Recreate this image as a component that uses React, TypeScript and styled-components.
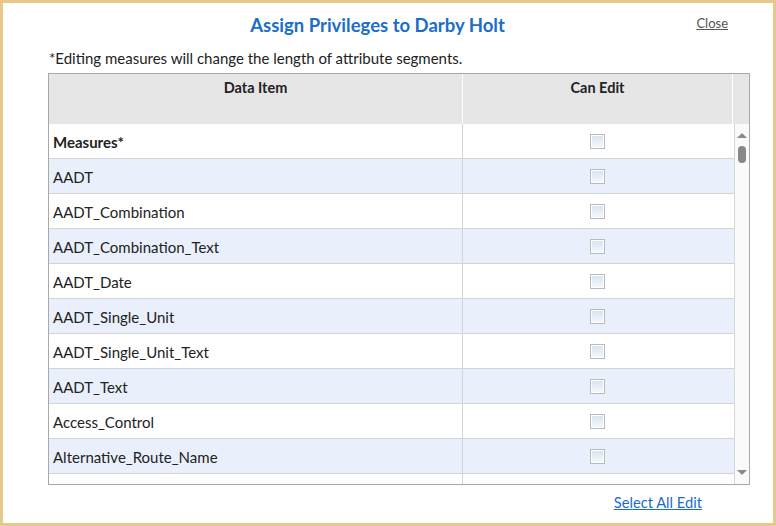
import React from "react";
import styled, { createGlobalStyle } from "styled-components";

const GlobalStyle = createGlobalStyle`
  html, body {
    margin: 0;
    padding: 0;
    background: #ffffff;
  }
  * {
    box-sizing: border-box;
  }
`;

const items: { name: string; bold?: boolean }[] = [
  { name: "Measures*", bold: true },
  { name: "AADT" },
  { name: "AADT_Combination" },
  { name: "AADT_Combination_Text" },
  { name: "AADT_Date" },
  { name: "AADT_Single_Unit" },
  { name: "AADT_Single_Unit_Text" },
  { name: "AADT_Text" },
  { name: "Access_Control" },
  { name: "Alternative_Route_Name" },
];

const App = () => {
  return (
    <>
      <GlobalStyle />
      <Dialog>
        <TitleBar>
          <Title>Assign Privileges to Darby Holt</Title>
          <CloseLink>Close</CloseLink>
        </TitleBar>
        <Note>*Editing measures will change the length of attribute segments.</Note>
        <Table>
          <HeadRow>
            <HeadCell>Data Item</HeadCell>
            <HeadCell>Can Edit</HeadCell>
            <HeadGutter />
          </HeadRow>
          <BodyWrap>
            <Rows>
              {items.map((item, i) => (
                <Row key={item.name} $alt={i % 2 === 1}>
                  <NameCell $bold={item.bold}>{item.name}</NameCell>
                  <CheckCell>
                    <Check />
                  </CheckCell>
                </Row>
              ))}
              <Row $alt={false} $last>
                <NameCell />
                <CheckCell />
              </Row>
            </Rows>
            <Scrollbar>
              <ArrowUp />
              <Thumb />
              <Track />
              <ArrowDown />
            </Scrollbar>
          </BodyWrap>
        </Table>
        <Footer>
          <SelectAll>Select All Edit</SelectAll>
        </Footer>
      </Dialog>
    </>
  );
};

const Dialog = styled.div`
  width: 776px;
  height: 526px;
  border: 3px solid #e6c98b;
  background: #ffffff;
  padding: 0 23px 0 45px;
  font-family: Lato, "Open Sans", sans-serif;
  color: #222;
  overflow: hidden;
`;

const TitleBar = styled.div`
  position: relative;
  height: 43px;
  display: flex;
  align-items: center;
  justify-content: center;
  padding-top: 1px;
`;

const Title = styled.h1`
  margin: 0 0 0 -43px;
  font-size: 18.5px;
  font-weight: 700;
  color: #1b6dc9;
`;

const CloseLink = styled.a`
  position: absolute;
  right: 22px;
  top: 12px;
  font-size: 13px;
  color: #555;
  text-decoration: underline;
  cursor: pointer;
`;

const Note = styled.div`
  font-size: 15px;
  height: 27px;
  line-height: 24px;
  color: #222;
  padding-left: 1px;
`;

const Table = styled.div`
  width: 702px;
  border: 1px solid #a8a8a8;
  display: flex;
  flex-direction: column;
`;

const HeadRow = styled.div`
  display: grid;
  grid-template-columns: 414px 270px 1fr;
  height: 50px;
  background: #e6e6e6;
`;

const HeadCell = styled.div`
  text-align: center;
  font-weight: 700;
  font-size: 14.5px;
  padding-top: 5px;
  border-right: 1px solid #ffffff;
`;

const HeadGutter = styled.div`
  background: #e6e6e6;
`;

const BodyWrap = styled.div`
  display: flex;
  height: 360px;
  overflow: hidden;
`;

const Rows = styled.div`
  flex: 1;
  display: flex;
  flex-direction: column;
`;

const Row = styled.div<{ $alt: boolean; $last?: boolean }>`
  display: grid;
  grid-template-columns: 414px 1fr;
  flex: ${(p) => (p.$last ? "1 1 auto" : "0 0 35px")};
  border-bottom: ${(p) => (p.$last ? "none" : "1px solid #d4d4d4")};
  background: ${(p) => (p.$alt ? "#eaf0fb" : "#ffffff")};
`;

const NameCell = styled.div<{ $bold?: boolean }>`
  display: flex;
  align-items: center;
  padding: 1px 0 0 4px;
  font-size: 15px;
  font-weight: ${(p) => (p.$bold ? 700 : 400)};
  border-right: 1px solid #d4d4d4;
`;

const CheckCell = styled.div`
  display: flex;
  align-items: center;
  justify-content: center;
  padding: 1px 3px 0 0;
`;

const Check = styled.span`
  width: 15px;
  height: 15px;
  border: 1px solid #b7bbc1;
  box-shadow: inset 0 0 0 1px #ffffff;
  background: linear-gradient(#d6e3ef, #f6f9fc);
`;

const Scrollbar = styled.div`
  width: 15px;
  flex: 0 0 15px;
  border-left: 1px solid #d8d8d8;
  background: #fafafa;
  display: flex;
  flex-direction: column;
  align-items: center;
  padding: 9px 0 9px;
`;

const ArrowUp = styled.span`
  width: 0;
  height: 0;
  border-left: 5px solid transparent;
  border-right: 5px solid transparent;
  border-bottom: 5px solid #8a8a8a;
`;

const ArrowDown = styled.span`
  width: 0;
  height: 0;
  border-left: 5px solid transparent;
  border-right: 5px solid transparent;
  border-top: 5px solid #8a8a8a;
`;

const Thumb = styled.span`
  margin-top: 8px;
  width: 8px;
  height: 17px;
  border-radius: 4px;
  background: #888888;
`;

const Track = styled.span`
  flex: 1;
`;

const Footer = styled.div`
  width: 702px;
  display: flex;
  justify-content: flex-end;
  padding: 8px 48px 0 0;
`;

const SelectAll = styled.a`
  font-size: 14.7px;
  color: #1b6dc9;
  text-decoration: underline;
  cursor: pointer;
`;

export default App;
